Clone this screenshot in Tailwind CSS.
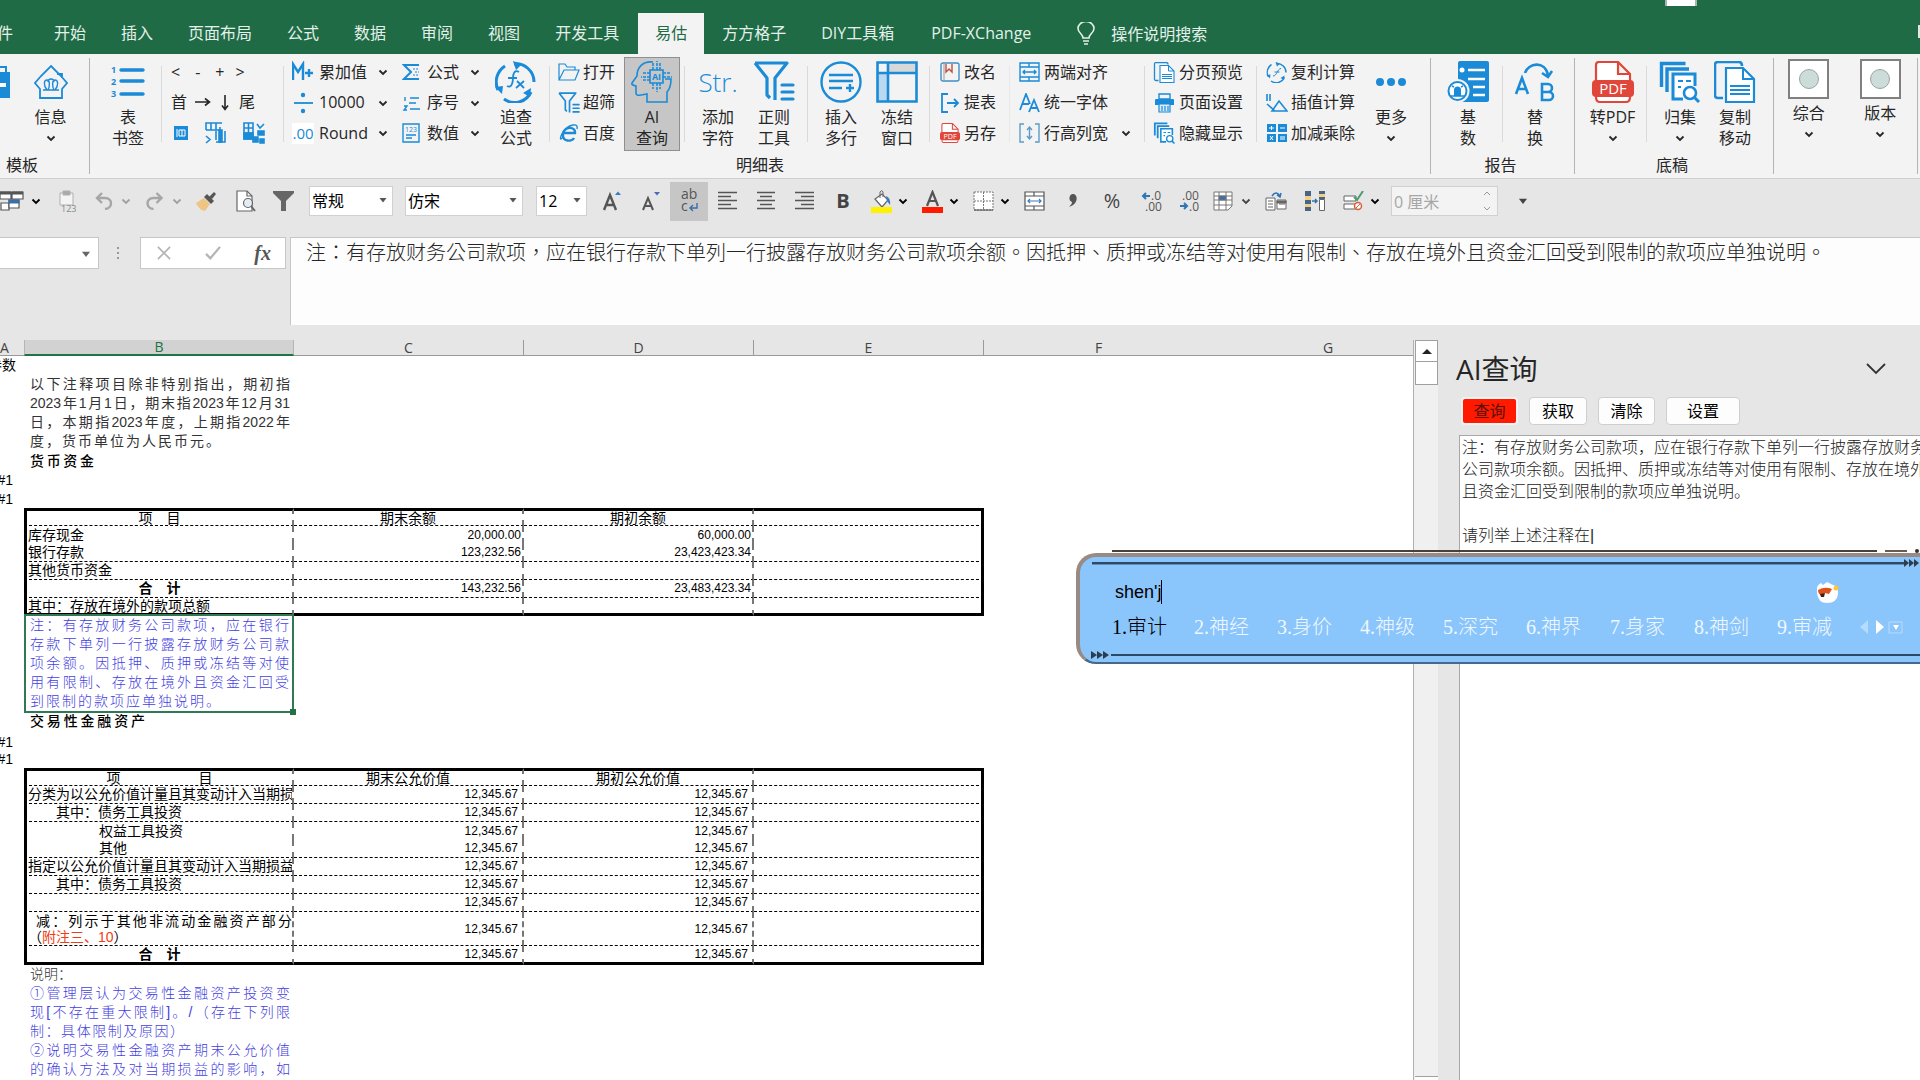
<!DOCTYPE html>
<html lang="zh-CN">
<head>
    <meta charset="UTF-8">
    <meta name="viewport" content="width=device-width, initial-scale=1.0">
    <title>易估 - AI查询</title>
    <script src="https://cdn.jsdelivr.net/npm/@tailwindcss/browser@4"></script>
</head>
<body class="h-screen flex flex-col overflow-hidden bg-[#e6e6e6] text-[#262626] text-[16px] font-['Open_Sans','Noto_Sans_CJK_SC',sans-serif]">

    <!-- 图标定义 -->
    <svg class="hidden" aria-hidden="true">
        <symbol id="chev" viewBox="0 0 12 12"><path d="M2.5 4.5 6 8l3.5-3.5" fill="none" stroke="currentColor" stroke-width="1.8"/></symbol>
        <symbol id="tri" viewBox="0 0 12 12"><path d="M2.5 4h7L6 8.5z" fill="currentColor"/></symbol>
        <symbol id="filter" viewBox="0 0 42 42">
            <path d="M2 2h32L22 17v22M2 2l12 15v17l3 3" fill="none" stroke="currentColor" stroke-width="3.2" stroke-linejoin="round"/>
            <path d="M29 24h11M29 31h11M29 38h11" stroke="currentColor" stroke-width="3.2" stroke-linecap="round"/>
        </symbol>
        <symbol id="pdf" viewBox="0 0 42 42">
            <path d="M4 20V4q0-3 3-3h19l12 12v7M26 1v12h12M4 36q0 5 4 5h26q4 0 4-5" fill="#fff" stroke="#e0473a" stroke-width="2.2"/>
            <rect y="19" width="42" height="17" rx="4" fill="#e0473a"/>
            <text x="21" y="33" text-anchor="middle" font-size="15" fill="#fff" font-family="Open Sans, sans-serif">PDF</text>
        </symbol>
        <symbol id="copy" viewBox="0 0 42 42">
            <path d="M9 37H4q-3 0-3-3V4q0-3 3-3h21q3 0 3 4" fill="none" stroke="currentColor" stroke-width="2.6"/>
            <path d="M12 7h17l11 11v23H12z" fill="#fff" stroke="currentColor" stroke-width="2.2"/>
            <path d="M29 7v11h11M16 25h20M16 29h20M16 33h20" fill="none" stroke="currentColor" stroke-width="2"/>
        </symbol>
        <symbol id="stack" viewBox="0 0 42 42">
            <path d="M2.500 26V2.500h24M8 31V8h22" fill="none" stroke="currentColor" stroke-width="3.4"/>
            <path d="M24 38H14V13h22v12" fill="#fff" stroke="currentColor" stroke-width="3"/>
            <path d="M19 20h5M27 20h5M19 26h3" stroke="currentColor" stroke-width="2"/>
            <circle cx="31" cy="32" r="6" fill="#fff" stroke="currentColor" stroke-width="2.6"/><path d="m35 36 5 5" stroke="currentColor" stroke-width="3"/>
        </symbol>
        <symbol id="cycle" viewBox="0 0 42 42">
            <path d="M10 5A19 19 0 0 0 3 29M19 3a18 18 0 0 1 20 18M36 31a18 18 0 0 1-27 7" fill="none" stroke="currentColor" stroke-width="3"/>
            <path d="m18 0 9 3-6 6zM0 26l8-1-1 8zM36 27l-1 9-7-4z" fill="currentColor"/>
        </symbol>
        <symbol id="alignl" viewBox="0 0 20 20"><path d="M0 1.5h19M0 5.5h13M0 9.5h19M0 13.5h13M0 17.5h19" stroke="#555" stroke-width="1.3"/></symbol>
        <symbol id="alignc" viewBox="0 0 20 20"><path d="M1 1.5h18M4 5.5h12M1 9.5h18M4 13.5h12M1 17.5h18" stroke="#555" stroke-width="1.3"/></symbol>
        <symbol id="alignr" viewBox="0 0 20 20"><path d="M1 1.5h19M7 5.5h13M1 9.5h19M7 13.5h13M1 17.5h19" stroke="#555" stroke-width="1.3"/></symbol>
    </svg>

    <!-- 标题栏与选项卡 -->
    <header class="relative flex items-end h-[54px] shrink-0 bg-[#1e6b46] text-[#e4f0e9] overflow-hidden">
        <nav class="flex gap-px h-[41px] -ml-9 leading-[40px] whitespace-nowrap">
            <a href="#" class="px-[17px]">文件</a>
            <a href="#" class="px-[17px] ml-1.5">开始</a>
            <a href="#" class="px-[17px]">插入</a>
            <a href="#" class="px-[17px]">页面布局</a>
            <a href="#" class="px-[17px]">公式</a>
            <a href="#" class="px-[17px]">数据</a>
            <a href="#" class="px-[17px]">审阅</a>
            <a href="#" class="px-[17px]">视图</a>
            <a href="#" class="px-[17px] mr-px">开发工具</a>
            <a href="#" class="px-[17px] bg-[#f3f3f3] text-[#1e6b46]">易估</a>
            <a href="#" class="px-[17px]">方方格子</a>
            <a href="#" class="px-[17px]">DIY工具箱</a>
            <a href="#" class="px-[17px] ml-0.5">PDF-XChange</a>
            <button class="flex items-center gap-4 pl-7">
                <svg class="w-[18px] h-[23px]" viewBox="0 0 18 23" fill="none" stroke="currentColor" stroke-width="1.6"><path d="M6 16c0-4-5-5-5-9.500a8 7 0 0 1 16 0C17 11 12 12 12 16zM6 19h6M7 22h4"/></svg>
                操作说明搜索
            </button>
        </nav>
        <div class="absolute top-0 left-[1665px] w-8 h-1.5 bg-white border-x-2 border-[#a8b5ae]"></div>
        <div class="absolute right-0 top-[25px] w-0.5 h-[13px] bg-[#dfe9e4]"></div>
    </header>

    <!-- 功能区 -->
    <div class="flex h-[125px] shrink-0 bg-[#f3f3f3] border-b border-[#cfcfcf] overflow-hidden leading-[21px] whitespace-nowrap">
        <section class="flex flex-col w-[89px] shrink-0">
            <div class="flex h-[101px] -ml-7">
                <button class="flex flex-col items-center w-12 pt-[7px] text-[#1b8bd8]">
                    <svg class="w-[42px] h-[42px] mb-1" viewBox="0 0 42 42"><path d="M2 11h33v26H2z" fill="currentColor"/><path d="M24 11V6h7v5" fill="none" stroke="currentColor" stroke-width="2"/><path d="M22 24h9" stroke="#fff" stroke-width="4"/></svg>
                    <span class="text-[#262626] -ml-4">模<br>板</span>
                </button>
                <button class="flex flex-col items-center w-[61px] pt-[7px] text-[#1b8bd8]">
                    <svg class="w-[34px] h-[42px] mb-1" viewBox="0 0 34 42" fill="none" stroke="currentColor" stroke-width="1.8"><path d="M17 5 27 15l6 7-5 6v9H6v-9l-5-6 6-7zM23 13h5v4"/><path d="M9 29h4c-4-5-3-10 0-10s3 6 1 10M13 29h8M25 29h-4c4-5 3-10 0-10s-3 6-1 10M14 21a3 3 0 0 1 6 0" stroke-width="1.4"/></svg>
                    <span class="text-[#262626]">信息</span>
                    <svg class="w-3 h-3 mt-1 text-[#262626]"><use href="#chev"/></svg>
                </button>
            </div>
            <p class="pl-1.5">模板</p>
        </section>
        <div class="w-px my-1 shrink-0 bg-[#b4b4b4]"></div>

        <!-- 明细表 -->
        <section class="flex flex-col w-[1340px] shrink-0">
            <div class="flex h-[101px]">
                <button class="flex flex-col items-center w-16 ml-1.5 pt-[7px]">
                    <svg class="w-[42px] h-[42px] mb-1 text-[#1b8bd8]" viewBox="0 0 42 42"><path d="M14 9h22M14 20h22M14 33h22" stroke="currentColor" stroke-width="3.4" stroke-linecap="round"/><g fill="currentColor" font-size="9" font-weight="bold" font-family="Open Sans, sans-serif"><text x="4" y="12">1</text><text x="4" y="24">2</text><text x="4" y="36">3</text></g></svg>
                    <span>表<br>书签</span>
                </button>
                <div class="w-px mt-3 h-[76px] ml-px bg-[#dadada]"></div>
                <div class="w-[121px] pl-[9px] pt-[3px]">
                    <div class="flex items-center h-[30px] text-[16px] gap-[11px]"><button>&lt;</button><button class="px-1">-</button><button>+</button><button>&gt;</button></div>
                    <div class="flex items-center h-[31px] gap-2">
                        <button>首</button>
                        <button aria-label="右"><svg class="w-4 h-4" viewBox="0 0 16 16" fill="none" stroke="currentColor" stroke-width="1.6"><path d="M0 7h14M10 3.500 14.500 7 10 10.500"/></svg></button>
                        <button aria-label="下"><svg class="w-3 h-4" viewBox="0 0 12 16" fill="none" stroke="currentColor" stroke-width="1.6"><path d="M6 0v14M3 10.500 6 14.500l3-4"/></svg></button>
                        <button>尾</button>
                    </div>
                    <div class="flex items-center h-[30px] text-[#1b8bd8] gap-4">
                        <button aria-label="单元格" class="pl-0.5"><svg class="w-4 h-4" viewBox="0 0 16 16"><path d="M1 1h14v14H1z" fill="currentColor"/><path d="M4 4v8M6 5h6v6H6zM9 5v6" fill="none" stroke="#fff"/></svg></button>
                        <button aria-label="行列"><svg class="w-[22px] h-[22px]" viewBox="0 0 22 22" fill="none" stroke="currentColor" stroke-width="1.6"><path d="M1 8V1h16M6 1v7M11 1v7M1 8h14v-3M1 14l4 3.500L1 21M11 9v9M15 7v14M20 9v11H11"/><path d="M14 8h3v12h-3z" fill="currentColor"/></svg></button>
                        <button aria-label="选区"><svg class="w-[23px] h-[22px]" viewBox="0 0 23 22" fill="none" stroke="currentColor" stroke-width="1.6"><path d="M1 1h9v16H1zM1 6h9M1 11h9M5.500 1v10M14 2l3 4 4-4"/><path d="M1 11h9v6H1zM15 9h6v4h-6zM10 15h5v5h-5zM17 17h4v4h-4z" fill="currentColor"/></svg></button>
                    </div>
                </div>
                <div class="w-px mt-3 h-[76px] bg-[#dadada]"></div>
                <div class="w-[106px] pl-2 pr-px pt-[3px]">
                    <button class="flex items-center w-full h-[30px] gap-[5px]"><svg class="w-[22px] h-[22px]" viewBox="0 0 22 22"><path d="M1 19V3l5 8 5-8v16M13 12h8M17 8v8" fill="none" stroke="#1b8bd8" stroke-width="2.4"/></svg>累加值<svg class="w-3 h-3 ml-auto"><use href="#chev"/></svg></button>
                    <button class="flex items-center w-full h-[31px] gap-[5px]"><svg class="w-[22px] h-[22px]" viewBox="0 0 22 22"><path d="M2 11h19" stroke="#1b8bd8" stroke-width="1.800"/><circle cx="11" cy="3" r="2.200" fill="#1b8bd8"/><circle cx="11" cy="19" r="2.200" fill="#1b8bd8"/></svg>10000<svg class="w-3 h-3 ml-auto"><use href="#chev"/></svg></button>
                    <button class="flex items-center w-full h-[30px] gap-[5px]"><span class="w-[22px] bg-white text-[#1b8bd8] text-[15px]">.00</span>Round<svg class="w-3 h-3 ml-auto"><use href="#chev"/></svg></button>
                </div>
                <div class="w-[93px] pl-3 pr-0.5 pt-[3px]">
                    <button class="flex items-center w-full h-[30px] gap-[7px]"><svg class="w-[18px] h-[18px]" viewBox="0 0 18 18" fill="none" stroke="#1b8bd8"><path d="M17 2H2l7 7-7 7h15" stroke-width="2"/><path d="M11 6h6M13 9h4M11 12h6" stroke-dasharray="2 1"/></svg>公式<svg class="w-3 h-3 ml-auto"><use href="#chev"/></svg></button>
                    <button class="flex items-center w-full h-[31px] gap-[7px]"><svg class="w-[18px] h-[18px]" viewBox="0 0 18 18" fill="none" stroke="#1b8bd8" stroke-width="1.400"><path d="M8 4h9M7 9h7M8 15h10M3 3v4M2 12h3l-3 4h3"/></svg>序号<svg class="w-3 h-3 ml-auto"><use href="#chev"/></svg></button>
                    <button class="flex items-center w-full h-[30px] gap-[7px]"><svg class="w-[18px] h-[20px]" viewBox="0 0 18 20" fill="none" stroke="#1b8bd8" stroke-width="1.400"><path d="M1 1h16v18H1zM4 12h10M4 15h6"/><text x="9" y="9" text-anchor="middle" font-size="7" fill="#1b8bd8" stroke="none" font-family="Open Sans, sans-serif">123</text></svg>数值<svg class="w-3 h-3 ml-auto"><use href="#chev"/></svg></button>
                </div>
                <button class="flex flex-col items-center w-[66px] pt-[7px]">
                    <svg class="w-[42px] h-[42px] mb-1 text-[#1b8bd8]" viewBox="0 0 42 42"><use href="#cycle"/><path d="M24 11c-5-3-6 3-6 6s-1 11-6 8M13 17h9M22 20l7 7M29 20l-8 7" fill="none" stroke="currentColor" stroke-width="1.800"/></svg>
                    <span>追查<br>公式</span>
                </button>
                <div class="w-px mt-3 h-[76px] bg-[#dadada]"></div>
                <div class="w-[72px] pl-2 pt-[3px]">
                    <button class="flex items-center h-[30px] gap-[3px]"><svg class="w-[22px] h-[18px]" viewBox="0 0 22 18" fill="none" stroke="#1b8bd8" stroke-width="1.200"><path d="M1 17V1h6l2 3h8v3M1 17l5-10h15l-4 10z"/></svg>打开</button>
                    <button class="flex items-center h-[31px] gap-[3px]"><svg class="w-[22px] h-[22px] text-[#1b8bd8]"><use href="#filter"/></svg>超筛</button>
                    <button class="flex items-center h-[30px] gap-[3px]"><svg class="w-[22px] h-[18px]" viewBox="0 0 22 18" fill="none" stroke="#1b8bd8"><path d="M6 9h11c1-7-11-7-12 1-1 8 9 8 11 4" stroke-width="2.400"/><path d="M4 14C0 19 4 3 15 1q5-1 4 4" stroke-width="1.400"/></svg>百度</button>
                </div>
                <button class="flex flex-col items-center w-14 h-[94px] mt-[3px] ml-0.5 pt-[3px] bg-[#c6c6c6] border border-[#8f8f8f]">
                    <svg class="w-[42px] h-[42px] mb-1 text-[#1b8bd8]" viewBox="0 0 42 42" fill="none" stroke="currentColor" stroke-width="1.600">
                        <path d="M22 1C11 0 6 7 6 15L1 22q-1 2 4 3v7q0 3 5 2l6-1v8h20V31q4-4 4-13h-6"/>
                        <path d="M19 9h13v13H19z"/>
                        <path d="M22 9V2M26 9V0M29 9V2M22 22v6M26 22v9M29 22v6M19 12h-7M19 16h-9M19 19h-7M32 12h7M32 16h9" stroke-dasharray="3 1"/>
                        <text x="25.500" y="19" text-anchor="middle" font-size="9" font-weight="bold" fill="currentColor" stroke="none" font-family="Open Sans, sans-serif">AI</text>
                    </svg>
                    <span>AI<br>查询</span>
                </button>
                <div class="w-px mt-3 h-[76px] ml-1 bg-[#dadada]"></div>
                <button class="flex flex-col items-center w-14 ml-[5px] pt-[7px]">
                    <span class="h-[46px] leading-[42px] text-[26px] text-[#1b8bd8] font-light">Str.</span>
                    <span>添加<br>字符</span>
                </button>
                <button class="flex flex-col items-center w-14 pt-[7px]">
                    <svg class="w-[42px] h-[42px] mb-1 text-[#1b8bd8]"><use href="#filter"/></svg>
                    <span>正则<br>工具</span>
                </button>
                <div class="w-px mt-3 h-[76px] ml-[5px] bg-[#dadada]"></div>
                <button class="flex flex-col items-center w-14 ml-[5px] pt-[7px]">
                    <svg class="w-[42px] h-[42px] mb-1 text-[#1b8bd8]" viewBox="0 0 42 42" fill="none" stroke="currentColor" stroke-width="2.400"><circle cx="21" cy="21" r="19.500"/><path d="M9 14h24M9 20h24M9 27h13M26 27h8M30 23v8"/></svg>
                    <span>插入<br>多行</span>
                </button>
                <button class="flex flex-col items-center w-14 pt-[7px]">
                    <svg class="w-[42px] h-[42px] mb-1" viewBox="0 0 42 42"><path d="M12 2h28v9H12z" fill="#d8d8d8"/><path d="M2 11h10v29H2z" fill="#b9d9f0"/><path d="M1.500 1.500h39v39h-39zM12 1v40M1 12h40" fill="none" stroke="#1b8bd8" stroke-width="2.600"/></svg>
                    <span>冻结<br>窗口</span>
                </button>
                <div class="w-px mt-3 h-[76px] ml-1 bg-[#dadada]"></div>
                <div class="w-[79px] pl-[10px] pt-[3px]">
                    <button class="flex items-center h-[30px] gap-1"><svg class="w-5 h-5" viewBox="0 0 20 20" fill="none"><rect x="1" y="1" width="18" height="18" rx="2" stroke="#3f8fc6" stroke-width="1.400"/><path d="M4 1v18" stroke="#999"/><path d="M6 2v8l3-3 3 3V2" stroke="#c0503c" stroke-width="1.400"/></svg>改名</button>
                    <button class="flex items-center h-[31px] gap-1"><svg class="w-5 h-5" viewBox="0 0 20 20" fill="none" stroke="#1b8bd8" stroke-width="1.800"><path d="M8 1H2v18h6M7 10h11M14 6l4 4-4 4"/></svg>提表</button>
                    <button class="flex items-center h-[30px] gap-1"><svg class="w-5 h-5"><use href="#pdf"/></svg>另存</button>
                </div>
                <div class="w-px mt-3 h-[76px] bg-[#e8e8e8]"></div>
                <div class="w-[134px] pl-[9px] pr-3 pt-[3px]">
                    <button class="flex items-center h-[30px] gap-1"><svg class="w-[21px] h-[20px]" viewBox="0 0 21 20" fill="none" stroke="#1b8bd8" stroke-width="1.400"><path d="M1 1h19v18H1zM1 5h19M1 15h19M10 1v4M10 15v4M4 10h13M6 8l-2 2 2 2M15 8l2 2-2 2"/></svg>两端对齐</button>
                    <button class="flex items-center h-[31px] gap-1"><svg class="w-[21px] h-[20px]" viewBox="0 0 21 20" fill="none" stroke="#1b8bd8" stroke-width="1.800"><path d="M1 17 7 1l4 10M3 11h7M10 19l5-12 5 12M12 15h6"/></svg>统一字体</button>
                    <button class="flex items-center w-full h-[30px] gap-1"><svg class="w-[21px] h-[20px]" viewBox="0 0 21 20" fill="none" stroke="#5b9cc8" stroke-width="1.400"><path d="M5 1H1v18h4M16 1h4v18h-4M10.500 4v12M8 7l2.500-3L13 7M8 13l2.500 3 2.500-3"/></svg>行高列宽<svg class="w-3 h-3 ml-auto"><use href="#chev"/></svg></button>
                </div>
                <div class="w-px mt-3 h-[76px] bg-[#dadada]"></div>
                <div class="w-[111px] pl-2 pt-[3px]">
                    <button class="flex items-center h-[30px] gap-[3px]"><svg class="w-[23px] h-[21px] text-[#1b8bd8]"><use href="#copy"/></svg>分页预览</button>
                    <button class="flex items-center h-[31px] gap-[3px]"><svg class="w-[23px] h-[20px]" viewBox="0 0 23 20"><path d="M6 1h11v5H6z" fill="#f3f3f3" stroke="#1b8bd8" stroke-width="1.400"/><path d="M3 6h17q1 0 1 1v5H2V7q0-1 1-1z" fill="#1b8bd8"/><path d="M6 11h11v8H6zM9 13v5M12 13v5M15 13v5" fill="#d9ebf8" stroke="#1b8bd8" stroke-width="1.200"/></svg>页面设置</button>
                    <button class="flex items-center h-[30px] gap-[3px]"><svg class="w-[23px] h-[22px] text-[#1b8bd8]"><use href="#stack"/></svg>隐藏显示</button>
                </div>
                <div class="w-px mt-3 h-[76px] bg-[#dadada]"></div>
                <div class="w-[102px] pl-[9px] pt-[3px]">
                    <button class="flex items-center h-[30px] gap-[3px]"><svg class="w-[22px] h-[21px] text-[#1b8bd8]" viewBox="0 0 42 42"><use href="#cycle"/><path d="M13 28c8 0 8-14 16-15M16 20h10" fill="none" stroke="currentColor" stroke-width="2"/></svg>复利计算</button>
                    <button class="flex items-center h-[31px] gap-[3px]"><svg class="w-[22px] h-[20px]" viewBox="0 0 22 20" fill="none" stroke="#1b8bd8" stroke-width="1.600"><path d="M1 1v7M4 1v7M1 11l8 7M6 18 13 8l8 10z"/></svg>插值计算</button>
                    <button class="flex items-center h-[30px] gap-[3px]"><svg class="w-[22px] h-[20px]" viewBox="0 0 22 20"><path d="M1 1h9v8H1zM12 1h9v8h-9zM1 11h9v8H1zM12 11h9v8h-9z" fill="#1b8bd8"/><path d="M3 5h5M5.500 3v4M14 5h5M4 13l3 4M7 13l-3 4M14 14h5M14 16h5" stroke="#fff"/></svg>加减乘除</button>
                </div>
                <button class="flex flex-col items-center w-16 pt-[7px]">
                    <svg class="w-[42px] h-[42px] mb-1" viewBox="0 0 42 42" fill="#1b8bd8"><circle cx="10" cy="21" r="4"/><circle cx="21" cy="21" r="4"/><circle cx="32" cy="21" r="4"/></svg>
                    更多
                    <svg class="w-3 h-3 mt-1"><use href="#chev"/></svg>
                </button>
            </div>
            <p class="text-center">明细表</p>
        </section>
        <div class="w-px my-1 shrink-0 bg-[#b4b4b4]"></div>

        <!-- 报告 -->
        <section class="flex flex-col w-[143px] shrink-0">
            <div class="flex h-[101px]">
                <button class="flex flex-col items-center w-[68px] ml-[3px] pt-[7px]">
                    <svg class="w-[42px] h-[42px] mb-1" viewBox="0 0 42 42"><rect x="11" width="31" height="41" rx="2" fill="#1b8bd8"/><path d="M21 9h17M21 18h17M26 26h12M26 34h12" stroke="#fff" stroke-width="2.400"/><circle cx="15" cy="9" r="2.500" fill="#fff"/><circle cx="10.500" cy="30" r="12" fill="#f3f3f3"/><circle cx="10.500" cy="30" r="9" fill="#fff" stroke="#1b8bd8" stroke-width="2"/><path d="M7 35v-6a3.500 3.500 0 0 1 7 0v6z" fill="#1b8bd8"/><path d="M4 35h13M5 25l2 1M16 25l-2 1" stroke="#1b8bd8" stroke-width="1.400"/></svg>
                    <span>基<br>数</span>
                </button>
                <div class="w-px mt-3 h-[76px] bg-[#dadada]"></div>
                <button class="flex flex-col items-center w-16 pt-[7px]">
                    <svg class="w-[42px] h-[42px] mb-1" viewBox="0 0 42 42" fill="none" stroke="#1b8bd8" stroke-width="2.600"><path d="M2 33 8 17l6 16M4 28h8M28 23h6a4 4 0 0 1 0 8h-6zM28 31h7a4 4 0 0 1 0 8h-7zM11 12C14 2 31-1 34 14M28 12l6 4 4-6"/></svg>
                    <span>替<br>换</span>
                </button>
            </div>
            <p class="text-center pr-1">报告</p>
        </section>
        <div class="w-px my-1 shrink-0 bg-[#b4b4b4]"></div>

        <!-- 底稿 -->
        <section class="flex flex-col w-[198px] shrink-0">
            <div class="flex h-[101px]">
                <button class="flex flex-col items-center w-[67px] ml-1 pt-[7px]">
                    <svg class="w-[42px] h-[42px] mb-1"><use href="#pdf"/></svg>
                    转PDF
                    <svg class="w-3 h-3 mt-1"><use href="#chev"/></svg>
                </button>
                <div class="w-px mt-3 h-[76px] bg-[#dadada]"></div>
                <button class="flex flex-col items-center w-[54px] ml-1.5 pt-[7px] text-[#1b8bd8]">
                    <svg class="w-[42px] h-[42px] mb-1"><use href="#stack"/></svg>
                    <span class="text-[#262626]">归集</span>
                    <svg class="w-3 h-3 mt-1 text-[#262626]"><use href="#chev"/></svg>
                </button>
                <button class="flex flex-col items-center w-14 pt-[7px] text-[#1b8bd8]">
                    <svg class="w-[42px] h-[42px] mb-1"><use href="#copy"/></svg>
                    <span class="text-[#262626]">复制<br>移动</span>
                </button>
            </div>
            <p class="text-center pr-1">底稿</p>
        </section>
        <div class="w-px my-1 shrink-0 bg-[#b4b4b4]"></div>

        <section class="flex w-[143px] shrink-0">
            <button class="flex flex-col items-center w-[70px] pt-[5px]">
                <span class="flex items-center justify-center w-[41px] h-10 mb-1 bg-white border-2 border-[#808080]"><i class="w-5 h-5 rounded-full bg-[#cbdcd9] border border-[#9aa5a3]"></i></span>
                综合
                <svg class="w-3 h-3 mt-1"><use href="#chev"/></svg>
            </button>
            <button class="flex flex-col items-center w-[74px] pt-[5px]">
                <span class="flex items-center justify-center w-[41px] h-10 mb-1 bg-white border-2 border-[#808080]"><i class="w-5 h-5 rounded-full bg-[#cbdcd9] border border-[#9aa5a3]"></i></span>
                版本
                <svg class="w-3 h-3 mt-1"><use href="#chev"/></svg>
            </button>
        </section>
        <div class="w-px my-1 shrink-0 bg-[#b4b4b4]"></div>
    </div>

    <!-- 快速访问工具栏 -->
    <div class="flex items-center h-11 mb-3.5 shrink-0 text-[#444]">
        <button aria-label="窗口" class="shrink-0"><svg class="w-6 h-5" viewBox="0 0 24 20" fill="#fff" stroke="#555" stroke-width="1.200"><path d="M0 1h11v7H0zM12 1h11v7H12zM1 12h8v7H1z"/><path d="M0 2h11M12 2h11" stroke-width="3"/><path d="M9 9h10v8H9z"/><path d="M9 9h10v3H9z" fill="#3a6ea8" stroke="#3a6ea8"/></svg></button>
        <svg class="w-3 h-3 ml-1.5 shrink-0 text-black"><use href="#chev"/></svg>
        <button aria-label="粘贴值" class="ml-[17px] shrink-0"><svg class="w-[19px] h-[22px]" viewBox="0 0 19 22" fill="#f4f4f4" stroke="#b0b0b0"><path d="M1 3h13v12H1z"/><path d="M4 1h7v4H4z" fill="#aaa"/><text x="2" y="22" font-size="9" stroke="none" fill="#888" font-family="Open Sans, sans-serif">123</text></svg></button>
        <button aria-label="撤消" class="ml-[17px] shrink-0"><svg class="w-[18px] h-[18px]" viewBox="0 0 18 18" fill="none" stroke="#a6a6a6" stroke-width="2.400"><path d="M7 1 2 6l5 5M2 6h8c8 0 8 10 0 11"/></svg></button>
        <svg class="w-3 h-3 ml-[7px] shrink-0 text-[#a0a0a0]"><use href="#chev"/></svg>
        <button aria-label="恢复" class="ml-[13px] shrink-0"><svg class="w-[19px] h-[18px]" viewBox="0 0 18 18" fill="none" stroke="#a6a6a6" stroke-width="2.400"><path d="m11 1 5 5-5 5M16 6H8c-8 0-8 10 0 11"/></svg></button>
        <svg class="w-3 h-3 ml-[7px] shrink-0 text-[#a0a0a0]"><use href="#chev"/></svg>
        <button aria-label="格式刷" class="ml-3 shrink-0"><svg class="w-[22px] h-[20px]" viewBox="0 0 22 20"><path d="m1 12 8-5 6 6-5 7q-6-1-9-8z" fill="#eec585"/><path d="m9 6 3-3 7 7-3 3z" fill="#555"/><path d="m14 6 5-5 2 2-4 5z" fill="#555"/></svg></button>
        <button aria-label="打印预览" class="ml-[19px] shrink-0"><svg class="w-5 h-[22px]" viewBox="0 0 20 22" fill="#fff" stroke="#666" stroke-width="1.200"><path d="M1 1h10l5 5v15H1z"/><path d="M11 1v5h5" fill="none"/><circle cx="12" cy="13" r="4.500" fill="#e3edf5"/><path d="m15 16 4 5" stroke-width="2"/></svg></button>
        <button aria-label="筛选" class="ml-[17px] shrink-0"><svg class="w-[21px] h-5" viewBox="0 0 21 20"><path d="M0 0h21v2l-8 8v10H8V10L0 2z" fill="#666"/></svg></button>

        <label class="relative ml-[15px] shrink-0">
            <select aria-label="数字格式" class="block w-[84px] h-[30px] pl-0.5 bg-white border border-[#d0d0d0] appearance-none text-black"><option>常规</option></select>
            <svg class="absolute right-1 top-2 w-3 h-3 text-[#555]"><use href="#tri"/></svg>
        </label>
        <label class="relative ml-3 shrink-0">
            <select aria-label="字体" class="block w-[118px] h-[30px] pl-0.5 bg-white border border-[#d0d0d0] appearance-none text-black"><option>仿宋</option></select>
            <svg class="absolute right-1 top-2 w-3 h-3 text-[#555]"><use href="#tri"/></svg>
        </label>
        <label class="relative ml-[13px] shrink-0">
            <select aria-label="字号" class="block w-[51px] h-[30px] pl-0.5 bg-white border border-[#d0d0d0] appearance-none text-black"><option>12</option></select>
            <svg class="absolute right-1 top-2 w-3 h-3 text-[#555]"><use href="#tri"/></svg>
        </label>

        <button aria-label="增大字号" class="ml-4 shrink-0"><svg class="w-[18px] h-5" viewBox="0 0 18 20"><path d="M1 19 7 4l6 15M3 14h8" fill="none" stroke="#555" stroke-width="2.400"/><path d="m12 4 3-3.500L18 4z" fill="#3a7cc0"/></svg></button>
        <button aria-label="减小字号" class="ml-[21px] shrink-0"><svg class="w-[18px] h-5" viewBox="0 0 18 20"><path d="m1 19 5-12 5 12M3 15h6" fill="none" stroke="#555" stroke-width="2"/><path d="m12 1 3 3.500L18 1z" fill="#4a6cb0"/></svg></button>
        <button aria-label="自动换行" class="flex flex-col items-center justify-center w-[38px] h-[39px] ml-[10px] shrink-0 bg-[#c6c6c6]"><svg class="w-6 h-7" viewBox="0 0 24 28" fill="#555" font-family="Open Sans, sans-serif"><text x="4" y="12" font-size="14">ab</text><text x="4" y="24" font-size="14">c</text><path d="M20 16v5h-6M16 18l-3 3 3 3" fill="none" stroke="#3a6ea8" stroke-width="1.400"/></svg></button>
        <button aria-label="左对齐" class="ml-[10px] shrink-0"><svg class="w-5 h-5"><use href="#alignl"/></svg></button>
        <button aria-label="居中" class="ml-[18px] shrink-0"><svg class="w-5 h-5"><use href="#alignc"/></svg></button>
        <button aria-label="右对齐" class="ml-[18px] shrink-0"><svg class="w-5 h-5"><use href="#alignr"/></svg></button>
        <button class="w-4 ml-[21px] shrink-0 text-[20px] font-bold">B</button>
        <button aria-label="填充颜色" class="ml-5 shrink-0"><svg class="w-[21px] h-[23px]" viewBox="0 0 21 23"><path d="m4 9 7-5 6 6-6 7z" fill="#fff" stroke="#666" stroke-width="1.200"/><path d="M9 8V2q2-3 3 0v5" fill="none" stroke="#666"/><path d="M15 6q5 2 4 9l-3-4z" fill="#3a7cc0"/><path d="M0 17h21v6H0z" fill="#fff200"/></svg></button>
        <svg class="w-3 h-3 ml-[5px] shrink-0 text-black"><use href="#chev"/></svg>
        <button aria-label="字体颜色" class="ml-[13px] shrink-0"><svg class="w-[21px] h-[23px]" viewBox="0 0 21 23"><path d="m5 16 5.500-14L16 16M7 11h7" fill="none" stroke="#555" stroke-width="2.200"/><path d="M0 17h21v6H0z" fill="#ff1a00"/></svg></button>
        <svg class="w-3 h-3 ml-[5px] shrink-0 text-black"><use href="#chev"/></svg>
        <button aria-label="边框" class="ml-[13px] shrink-0"><svg class="w-[21px] h-[20px]" viewBox="0 0 21 20"><path d="M1 1h19v18H1zM10.500 1v18M1 10h19" fill="#fff" stroke="#777" stroke-dasharray="2 1"/><path d="M1 19h19" stroke="#444"/></svg></button>
        <svg class="w-3 h-3 ml-[5px] shrink-0 text-black"><use href="#chev"/></svg>
        <button aria-label="合并居中" class="ml-[13px] shrink-0"><svg class="w-[21px] h-[20px]" viewBox="0 0 21 20" fill="#fff" stroke="#555" stroke-width="1.200"><path d="M1 1h19v18H1zM1 5h19M1 15h19M10 1v4M10 15v4"/><path d="M4 10h13M6 8l-2 2 2 2M15 8l2 2-2 2" stroke="#3a7cc0" fill="none"/></svg></button>
        <button aria-label="千位分隔" class="ml-[22px] shrink-0"><svg class="w-3 h-4" viewBox="0 0 12 16"><path d="M6 1c5 0 6 10-4 13 3-3 3-4 3-5C1 8 2 1 6 1z" fill="#555"/></svg></button>
        <button class="w-5 ml-[23px] shrink-0 text-[20px]">%</button>
        <button aria-label="增加小数位" class="ml-[19px] shrink-0"><svg class="w-[21px] h-[22px]" viewBox="0 0 21 22" font-size="12" fill="#555" font-family="Open Sans, sans-serif"><text x="10" y="10">.0</text><text x="4" y="21">.00</text><path d="M9 6H2M5 3 2 6l3 3" fill="none" stroke="#2f74b5" stroke-width="2"/></svg></button>
        <button aria-label="减少小数位" class="ml-[17px] shrink-0"><svg class="w-[21px] h-[22px]" viewBox="0 0 21 22" font-size="12" fill="#555" font-family="Open Sans, sans-serif"><text x="3" y="10">.00</text><text x="10" y="21">.0</text><path d="M1 16h7M5 13l3 3-3 3" fill="none" stroke="#2f74b5" stroke-width="2"/></svg></button>
        <button aria-label="套用格式" class="ml-[13px] shrink-0"><svg class="w-5 h-5" viewBox="0 0 20 20" fill="#fff" stroke="#777"><path d="M1 1h18v14l-4 4H1zM1 5h18M1 9h18M1 14h18M6 1v18M13 1v18"/><path d="M6 5h7v4H6z" fill="#3a6ea8"/></svg></button>
        <svg class="w-3 h-3 ml-[7px] shrink-0"><use href="#chev"/></svg>
        <button aria-label="重复粘贴" class="ml-[13px] shrink-0"><svg class="w-[22px] h-5" viewBox="0 0 22 20" fill="#fff" stroke="#666"><path d="M1 7h9v12H1zM12 9h9v9h-9zM3 10h5M3 13h5M3 16h5M14 13h6"/><path d="M12 10h9v2h-9z" fill="#666"/><path d="M7 5q4-6 8 0M12 4l3 2 1-4" fill="none" stroke="#2f74b5" stroke-width="1.500"/></svg></button>
        <button aria-label="分列" class="ml-[17px] shrink-0"><svg class="w-[22px] h-5" viewBox="0 0 22 20"><path d="M1 0h6v20H1zM15 0h6v8h-6z" fill="#4a6484"/><path d="M1 5h6v4H1zM1 13h6v3H1zM15 3h6v3h-6z" fill="#f0cf8c"/><path d="M15.500 8.500h5v11h-5z" fill="#fff" stroke="#666"/><path d="M8 10h5M11 8l2 2-2 2" fill="none" stroke="#2f74b5" stroke-width="1.500"/></svg></button>
        <button aria-label="数据验证" class="ml-[17px] shrink-0"><svg class="w-[21px] h-5" viewBox="0 0 21 20" fill="#fff" stroke="#666"><path d="M1 5h12v5H1zM1 13h12v5H1z"/><path d="m11 6 3 3 6-9" fill="none" stroke="#4f9a72" stroke-width="2"/><circle cx="15" cy="15" r="3.500" stroke="#d9603c" stroke-width="1.500"/><path d="m13 17 4-4" stroke="#d9603c"/></svg></button>
        <svg class="w-3 h-3 ml-[5px] shrink-0 text-black"><use href="#chev"/></svg>
        <label class="relative ml-[10px] shrink-0">
            <input type="text" aria-label="高度" value="0 厘米" class="block w-[107px] h-[30px] pl-0.5 bg-[#f3f3f3] border border-[#d0d0d0] text-[#a6a6a6]">
            <svg class="absolute right-1.5 top-1 w-2.5 h-[22px]" viewBox="0 0 10 22" fill="none" stroke="#999"><path d="m2 5 3-3 3 3M2 17l3 3 3-3"/></svg>
        </label>
        <svg class="w-3.5 h-3.5 ml-[18px] shrink-0"><use href="#tri"/></svg>
    </div>

    <!-- 编辑栏 -->
    <div class="flex items-start h-[88px] mb-[15px] shrink-0">
        <label class="relative shrink-0">
            <input type="text" aria-label="名称框" class="block w-[99px] h-8 bg-white border-y border-r border-[#c6c6c6]">
            <svg class="absolute right-1.5 top-2.5 w-3.5 h-3.5 text-[#666]"><use href="#tri"/></svg>
        </label>
        <svg class="w-1 h-4 mt-2.5 ml-[17px] shrink-0" viewBox="0 0 4 16" fill="#999"><path d="M1 0h2v2H1zM1 5h2v2H1zM1 10h2v2H1z"/></svg>
        <div class="flex items-center justify-between w-[146px] h-8 ml-5 pl-4 pr-3.5 shrink-0 bg-white border border-[#c6c6c6]">
            <button aria-label="取消"><svg class="w-3.5 h-3.5" viewBox="0 0 16 16"><path d="m1 1 14 14M15 1 1 15" stroke="#b5b5b5" stroke-width="2"/></svg></button>
            <button aria-label="输入"><svg class="w-4 h-3.5" viewBox="0 0 18 16"><path d="m1 9 5 5L17 1" fill="none" stroke="#b5b5b5" stroke-width="2.600"/></svg></button>
            <button class="text-[20px] leading-7 italic font-bold text-[#555] font-['Liberation_Serif',serif]">fx</button>
        </div>
        <div class="flex-1 h-full ml-1 pl-[15px] bg-[#fdfdfd] border-t border-l border-[#c6c6c6] overflow-hidden whitespace-nowrap text-[20px] leading-7 font-light font-['Noto_Sans_CJK_TC',sans-serif]" lang="zh-TW">注：有存放财务公司款项，应在银行存款下单列一行披露存放财务公司款项余额。因抵押、质押或冻结等对使用有限制、存放在境外且资金汇回受到限制的款项应单独说明。</div>
    </div>

    <div class="flex flex-1 min-h-0">
        <!-- 工作表 -->
        <main class="flex-1 min-w-0 overflow-hidden bg-white border-r border-[#b0b0b0] text-[14px] leading-[17px] text-black font-['Liberation_Sans','Noto_Sans_CJK_SC',sans-serif]">
            <table class="table-fixed border-separate border-spacing-0 w-[1443px]">
                <colgroup>
                    <col class="w-6"><col class="w-[270px]"><col class="w-[230px]"><col class="w-[230px]"><col class="w-[230px]"><col class="w-[229px]"><col class="w-[230px]">
                </colgroup>
                <thead class="text-[#444] leading-[14px] bg-[#e6e6e6] font-['Open_Sans',sans-serif]">
                    <tr class="h-4">
                        <th class="font-normal text-left p-0 border-b border-[#9a9a9a]">A</th>
                        <th class="font-normal p-0 bg-[#d2d2d2] border-b-2 border-x border-x-[#b5b5b5] border-b-[#217346] text-[#217346]">B</th>
                        <th class="font-normal p-0 border-b border-r border-[#9a9a9a]">C</th>
                        <th class="font-normal p-0 border-b border-r border-[#9a9a9a]">D</th>
                        <th class="font-normal p-0 border-b border-r border-[#9a9a9a]">E</th>
                        <th class="font-normal p-0 border-b border-[#9a9a9a]">F</th>
                        <th class="font-normal p-0 border-b border-[#9a9a9a]">G</th>
                    </tr>
                </thead>
                <tbody>
                    <tr class="h-[18px]"><td class="p-0"><div class="flex justify-end w-4 overflow-hidden whitespace-nowrap">参数</div></td></tr>
                    <tr class="h-[78px] leading-[19px]">
                        <td></td>
                        <td class="p-0 pl-1.5 pr-1 text-[#333]">
                            <span class="block [text-align-last:justify]">以下注释项目除非特别指出，期初指</span>
                            <span class="block [text-align-last:justify]">2023年1月1日，期末指2023年12月31</span>
                            <span class="block [text-align-last:justify]">日，本期指2023年度，上期指2022年</span>
                            <span class="block w-[190px] [text-align-last:justify]">度，货币单位为人民币元。</span>
                        </td>
                    </tr>
                    <tr class="h-[19px]"><td></td><td class="p-0 pl-1.5 font-medium"><span class="block w-16 [text-align-last:justify]">货币资金</span></td></tr>
                    <tr class="h-[19px]"><td class="p-0"><div class="flex justify-end w-[13px] overflow-hidden">#1</div></td></tr>
                    <tr class="h-[18px]"><td class="p-0"><div class="flex justify-end w-[13px] overflow-hidden">#1</div></td></tr>
                </tbody>

                <!-- 货币资金表 -->
                <tbody id="cashRows"></tbody>

                <tbody>
                    <!-- 选中的注释单元格 -->
                    <tr class="h-[95px] leading-[19px]">
                        <td></td>
                        <td class="relative p-0 pl-1.5 pr-[5px] text-[#4340e0] font-light">
                            <span class="block [text-align-last:justify]">注：有存放财务公司款项，应在银行</span>
                            <span class="block [text-align-last:justify]">存款下单列一行披露存放财务公司款</span>
                            <span class="block [text-align-last:justify]">项余额。因抵押、质押或冻结等对使</span>
                            <span class="block [text-align-last:justify]">用有限制、存放在境外且资金汇回受</span>
                            <span class="block w-[190px] [text-align-last:justify]">到限制的款项应单独说明。</span>
                            <i class="absolute inset-x-0 -inset-y-0.5 border-2 border-[#2f7a55]"></i>
                            <i class="absolute -right-0.5 -bottom-1 w-1.5 h-1.5 bg-[#217346]"></i>
                        </td>
                    </tr>
                    <tr class="h-[22px]"><td></td><td class="p-0 pl-1.5 pt-0.5 align-top font-medium"><span class="block w-[115px] [text-align-last:justify]">交易性金融资产</span></td></tr>
                    <tr class="h-[18px]"><td class="p-0"><div class="flex justify-end w-[13px] overflow-hidden">#1</div></td></tr>
                    <tr class="h-[17px]"><td class="p-0"><div class="flex justify-end w-[13px] overflow-hidden">#1</div></td></tr>
                </tbody>

                <!-- 交易性金融资产表 -->
                <tbody id="assetRows"></tbody>

                <tbody>
                    <tr class="h-[116px] leading-[19px]">
                        <td></td>
                        <td class="p-0 pl-1.5 pr-1 align-top text-[#4340e0] font-light">
                            <span class="block text-[#333]">说明：</span>
                            <span class="block [text-align-last:justify]">①管理层认为交易性金融资产投资变</span>
                            <span class="block [text-align-last:justify]">现[不存在重大限制]。/（存在下列限</span>
                            <span class="block w-[154px] [text-align-last:justify]">制：具体限制及原因）</span>
                            <span class="block [text-align-last:justify]">②说明交易性金融资产期末公允价值</span>
                            <span class="block [text-align-last:justify]">的确认方法及对当期损益的影响，如</span>
                        </td>
                    </tr>
                </tbody>
            </table>
        </main>

        <!-- 垂直滚动条 -->
        <div class="flex flex-col justify-between w-6 shrink-0 bg-[#f0f0f0]">
            <div>
                <button aria-label="向上滚动" class="flex items-center justify-center w-[23px] h-[22px] ml-px bg-white border border-[#a0a0a0]"><svg class="w-2.5 h-[5px]" viewBox="0 0 12 6"><path d="M0 6 6 0l6 6z" fill="#222"/></svg></button>
                <div class="w-[23px] h-[23px] ml-px bg-white border border-t-0 border-[#a0a0a0]"></div>
            </div>
            <div class="w-[23px] h-1 ml-px bg-white border-t border-[#a0a0a0]"></div>
        </div>

        <!-- AI查询窗格 -->
        <aside class="flex flex-col w-[482px] shrink-0 overflow-hidden">
            <div class="flex items-center justify-between h-[57px] pl-[18px] pr-[34px]">
                <h2 class="text-[28px] leading-9">AI查询</h2>
                <button aria-label="窗格选项"><svg class="w-5 h-3" viewBox="0 0 20 12"><path d="m1 1 9 9 9-9" fill="none" stroke="#333" stroke-width="1.800"/></svg></button>
            </div>
            <div class="flex gap-[11px] pl-[23px] text-black leading-[22px]">
                <button class="w-[57px] h-7 border-2 border-[#f2f2f2] rounded-sm bg-[#ff1a00] text-[#5a1006]">查询</button>
                <button class="w-[58px] h-7 border border-[#cfcfcf] rounded-sm bg-[#fdfdfd]">获取</button>
                <button class="w-[57px] h-7 border border-[#cfcfcf] rounded-sm bg-[#fdfdfd]">清除</button>
                <button class="w-[74px] h-7 border border-[#cfcfcf] rounded-sm bg-[#fdfdfd]">设置</button>
            </div>
            <textarea aria-label="提问内容" class="flex-1 block w-[500px] mt-2.5 ml-[21px] pl-0.5 pt-px bg-white border-t border-l border-[#a8a8a8] resize-none overflow-hidden whitespace-pre text-[16px] leading-[22px] text-[#222] font-light font-['Liberation_Sans','Noto_Sans_CJK_SC',sans-serif]">注：有存放财务公司款项，应在银行存款下单列一行披露存放财务
公司款项余额。因抵押、质押或冻结等对使用有限制、存放在境外
且资金汇回受到限制的款项应单独说明。

请列举上述注释在|</textarea>
        </aside>
    </div>

    <!-- 输入法候选窗 -->
    <div class="absolute left-[1076px] right-0 top-[548px] overflow-hidden">
        <div class="flex items-center h-[5px] pl-9 gap-2 pr-px">
            <div class="flex-1 h-0.5 bg-[#4a4038]"></div>
            <div class="w-[22px] h-0.5 bg-[#6a5a50]"></div>
            <div class="w-1 h-1 rounded-full bg-[#3a302a]"></div>
        </div>
        <div class="h-[111px] bg-[#8ac5fb] border-t-4 border-l-4 border-b-2 border-[#9a8a84] border-b-[#44698c] rounded-l-[20px]">
            <div class="flex items-center h-3 pl-3">
                <div class="flex-1 h-[3px] border-t-2 border-b border-t-[#2c4a68] border-b-[#5f8db8]"></div>
                <svg class="w-4 h-2" viewBox="0 0 16 8" fill="#2c3c50"><path d="M0 0l5 4-5 4zM5 0l5 4-5 4zM10 0l5 4-5 4z"/></svg>
            </div>
            <div class="flex items-center justify-between h-[44px] pl-[35px] pr-[81px] pt-0.5">
                <span class="flex items-center text-[18px] text-black font-['Liberation_Sans',sans-serif]">shen'j<i class="w-px h-6 bg-black"></i></span>
                <svg class="w-[23px] h-[23px]" viewBox="0 0 23 23"><path d="M1 12Q0 4 5 2l2 2 4-3 4 2q8 2 7 10-1 9-11 9Q2 22 1 12z" fill="#fff"/><path d="M2 9q7-4 14-1l-3 5-4-1-4 2q-3-1-3-5z" fill="#e0521c"/><path d="m4 13 5-1-1 4H5z" fill="#4a1c10"/><circle cx="20" cy="7" r="2.500" fill="#ffc53a"/></svg>
            </div>
            <div class="flex items-center h-6 mt-0.5 pl-8 text-[20px] leading-6 whitespace-nowrap text-[#f0f8ff] font-light font-['Liberation_Serif','Noto_Sans_CJK_SC',serif]">
                <span class="w-[82px] text-black">1.审计</span>
                <span class="w-[83px]">2.神经</span>
                <span class="w-[83px]">3.身价</span>
                <span class="w-[83px]">4.神级</span>
                <span class="w-[83px]">5.深究</span>
                <span class="w-[84px]">6.神界</span>
                <span class="w-[84px]">7.身家</span>
                <span class="w-[83px]">8.神剑</span>
                <span class="w-[83px]">9.审减</span>
                <svg class="w-11 h-4" viewBox="0 0 44 16"><path d="M8 1v14L0 8z" fill="#b5dbff"/><path d="M16 1v14l8-7z" fill="#fff"/><path d="M29 3h13v11H29z" fill="none" stroke="#b9dcfc"/><path d="M33 6h6l-3 5z" fill="#fff"/></svg>
            </div>
            <div class="flex items-center h-3 mt-2.5 pl-[11px]">
                <svg class="w-5 h-2" viewBox="0 0 20 8" fill="#2c3c50"><path d="M0 0l6 4-6 4zM6 0l6 4-6 4zM12 0l6 4-6 4z"/></svg>
                <div class="flex-1 h-0.5 bg-[#2c4a68]"></div>
            </div>
        </div>
    </div>

    <script>
        // 货币资金
        const cashData = [
            { name: '库存现金', end: '20,000.00', begin: '60,000.00', open: true },
            { name: '银行存款', end: '123,232.56', begin: '23,423,423.34' },
            { name: '其他货币资金', end: '', begin: '' },
            { name: '合　计', end: '143,232.56', begin: '23,483,423.34', style: 'text-center font-bold' },
            { name: '其中：存放在境外的款项总额', end: '', begin: '', last: true }
        ];

        // 交易性金融资产
        const assetData = [
            { name: '分类为以公允价值计量且其变动计入当期损益' },
            { name: '其中：债务工具投资', style: 'pl-[29px]' },
            { name: '权益工具投资', style: 'pl-[72px]', open: true },
            { name: '其他', style: 'pl-[72px]' },
            { name: '指定以公允价值计量且其变动计入当期损益' },
            { name: '其中：债务工具投资', style: 'pl-[29px]' },
            { name: '' },
            {
                name: `<span class="block pl-2 [text-align-last:justify]">减：列示于其他非流动金融资产部分</span>
                       <span class="block">（<span class="text-[#f03c14]">附注三、10</span>）</span>`,
                height: 'h-[34px] leading-[16px]'
            },
            { name: '合　计', style: 'text-center font-bold', height: 'h-[19px] leading-[15px]', last: true }
        ];

        function headRow(titles) {
            return `
                <tr class="h-[18px] text-center leading-[14px]">
                    <td></td>
                    <td class="p-0 border-black border-dashed border-t-3 border-l-3 border-b border-r-2 border-r-[#777] [border-left-style:solid] [border-top-style:solid]">${titles[0]}</td>
                    <td class="p-0 border-black border-dashed border-t-3 border-b border-r-2 border-r-[#777] [border-top-style:solid]">${titles[1]}</td>
                    <td class="p-0 border-black border-dashed border-t-3 border-b border-r-2 border-r-[#777] [border-top-style:solid]">${titles[2]}</td>
                    <td class="p-0 border-black border-dashed border-t-3 border-b border-r-3 [border-top-style:solid] [border-right-style:solid]"></td>
                </tr>`;
        }

        function dataRow(row, pad) {
            // open: 无下框线, last: 粗下框线
            const bottom = row.open ? 'border-b-0' : row.last ? 'border-b-3 [border-bottom-style:solid]' : 'border-b';
            const height = row.height || (row.last ? 'h-[18px] leading-[14px]' : 'h-[18px]');
            return `
                <tr class="${height}">
                    <td></td>
                    <td class="p-0 overflow-hidden whitespace-nowrap border-black border-dashed border-l-3 border-r-2 border-r-[#777] [border-left-style:solid] ${bottom} ${row.style || 'pl-px'}">${row.name}</td>
                    <td class="p-0 text-right text-[12px] border-black border-dashed border-r-2 border-r-[#777] ${pad} ${bottom}">${row.end}</td>
                    <td class="p-0 text-right text-[12px] border-black border-dashed border-r-2 border-r-[#777] ${pad} ${bottom}">${row.begin}</td>
                    <td class="p-0 border-black border-dashed border-r-3 [border-right-style:solid] ${bottom}"></td>
                </tr>`;
        }

        document.getElementById('cashRows').innerHTML =
            headRow(['项　目', '期末余额', '期初余额']) +
            cashData.map(row => dataRow(row, 'pr-px')).join('');

        document.getElementById('assetRows').innerHTML =
            headRow(['<span class="flex justify-between w-[106px] mx-auto"><span>项</span><span>目</span></span>', '期末公允价值', '期初公允价值']) +
            assetData.map(row => dataRow({ end: '12,345.67', begin: '12,345.67', ...row }, 'pr-1')).join('');
    </script>
</body>
</html>
